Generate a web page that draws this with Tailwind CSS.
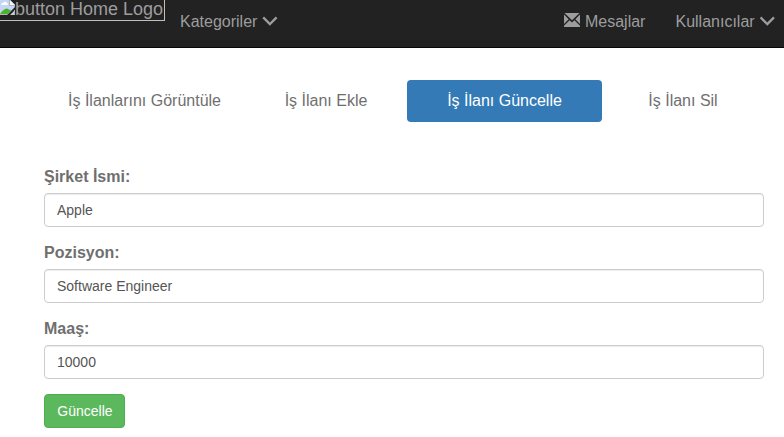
<!DOCTYPE html>
<html lang="tr">
<head>
<meta charset="utf-8">
<title>İş İlanı Güncelle</title>
<script src="https://cdn.jsdelivr.net/npm/@tailwindcss/browser@4"></script>
</head>
<body class="h-[437px] overflow-hidden bg-white font-['Liberation_Sans',Arial,sans-serif] text-base text-[#6f6f6f]">
<nav class="flex h-12 items-start justify-between border-b border-[#080808] bg-[#222] text-[#9d9d9d]">
  <div class="flex">
    <a class="flex h-[21px] w-[165px] border-r border-b border-[#c0c0c0] text-lg leading-[18px] whitespace-nowrap">
      <svg class="h-[15px] w-[15px] shrink-0" viewBox="0 0 15 15">
        <path d="M0 0H10L15 5V7L7 15H0Z" fill="#c4d6f5"/>
        <path d="M1 5Q1 3 3 3Q4 1 6 2Q8 3 8 5Z" fill="#fff"/>
        <path d="M0 14Q3 9 7 8.500L11 10.500L7 14.500H0Z" fill="#4db22a"/>
        <path d="M15 10V15H10Z" fill="#c5d2c8"/>
        <path d="M10 0V5H15Z" fill="#f5f5f5"/>
        <path d="M9.500 0V5.500H14.500V7M0 14.500H7M14.500 10V15" fill="none" stroke="#b5b5b5"/>
      </svg>
      <span>button Home Logo</span>
    </a>
    <a class="ml-[15px] flex h-[43px] items-center whitespace-nowrap">Kategoriler
      <svg class="ml-1 h-4 w-4 overflow-visible" viewBox="0 0 16 16" fill="none" stroke="currentColor" stroke-width="2.300"><path d="M2.200 3.400L8.900 10.100L15.600 3.400"/></svg>
    </a>
  </div>
  <div class="flex gap-[30px] pr-[9.4px]">
    <a class="flex h-[43px] items-center whitespace-nowrap">
      <svg class="mr-[5px] mb-[3px] h-[14px] w-4" viewBox="0 0 16 14" fill="currentColor"><path d="M0.500 0H15.500L8 7.300Z"/><path d="M0 1.600L4.700 6.200L0 11ZM16 1.600L11.300 6.200L16 11ZM5.600 7.200L8 9.500L10.400 7.200L16 12.700V14H0V12.700Z"/></svg>Mesajlar</a>
    <a class="flex h-[43px] items-center whitespace-nowrap">Kullanıcılar
      <svg class="ml-1 h-4 w-4 overflow-visible" viewBox="0 0 16 16" fill="none" stroke="currentColor" stroke-width="2.300"><path d="M1.600 3.400L8.300 10.100L15 3.400"/></svg>
    </a>
  </div>
</nav>
<main class="pt-8 pr-5 pl-11">
  <ul class="grid h-[42px] grid-cols-[201px_162px_195px_162px] items-stretch text-center leading-[42px] whitespace-nowrap">
    <li>İş İlanlarını Görüntüle</li>
    <li>İş İlanı Ekle</li>
    <li class="rounded bg-[#337ab7] text-white">İş İlanı Güncelle</li>
    <li>İş İlanı Sil</li>
  </ul>
  <form class="mt-[43px]">
    <div class="mb-[15px]">
      <label class="mb-[5px] block leading-[23px] font-bold">Şirket İsmi:</label>
      <input type="text" value="Apple" class="block h-[34px] w-full rounded border border-[#ccc] bg-white px-3 text-sm text-[#555] shadow-[inset_0_1px_1px_rgba(0,0,0,0.075)]">
    </div>
    <div class="mb-[15px]">
      <label class="mb-[5px] block leading-[22px] font-bold">Pozisyon:</label>
      <input type="text" value="Software Engineer" class="block h-[34px] w-full rounded border border-[#ccc] bg-white px-3 text-sm text-[#555] shadow-[inset_0_1px_1px_rgba(0,0,0,0.075)]">
    </div>
    <div class="mb-[15px]">
      <label class="mb-[5px] block leading-[22px] font-bold">Maaş:</label>
      <input type="text" value="10000" class="block h-[34px] w-full rounded border border-[#ccc] bg-white px-3 text-sm text-[#555] shadow-[inset_0_1px_1px_rgba(0,0,0,0.075)]">
    </div>
    <button type="button" class="block h-[34px] w-[81px] rounded border border-[#4cae4c] bg-[#5cb85c] pl-px text-sm text-white">Güncelle</button>
  </form>
</main>
</body>
</html>
